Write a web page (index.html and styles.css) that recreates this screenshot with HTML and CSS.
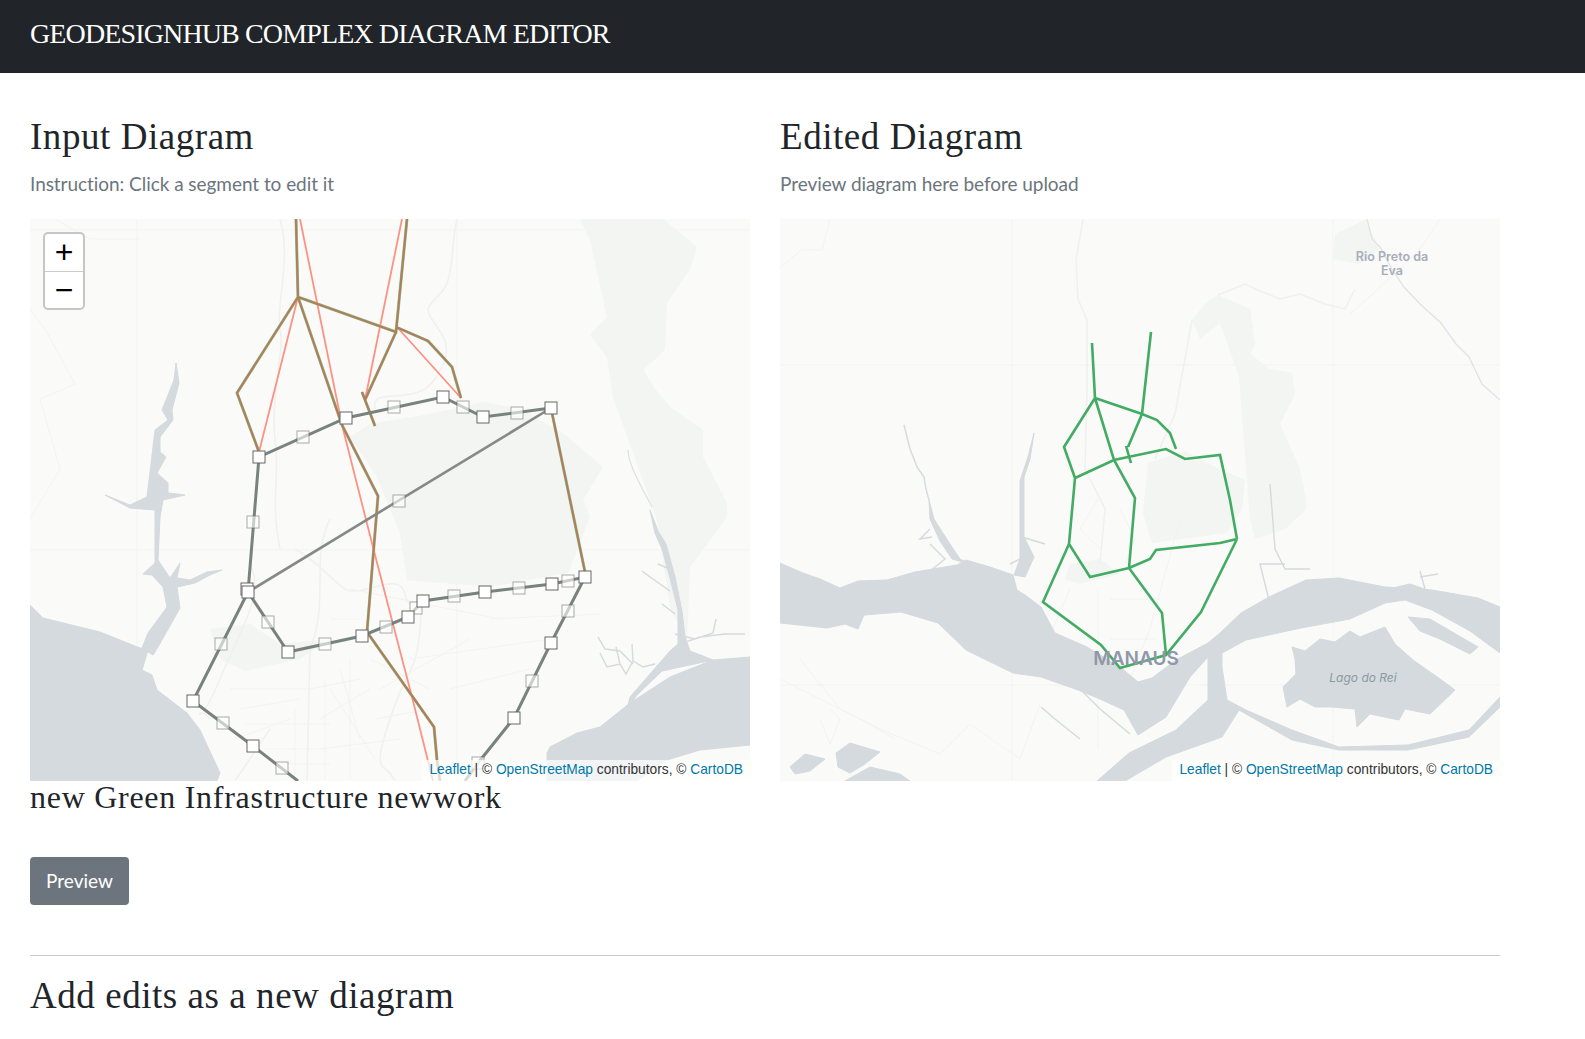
FILE: index.html
```html
<!DOCTYPE html>
<html lang="en">
<head>
<meta charset="utf-8">
<title>Geodesignhub Complex Diagram Editor</title>
<link rel="stylesheet" href="styles.css">
</head>
<body>
<header class="topbar"><span class="brand">GEODESIGNHUB COMPLEX DIAGRAM EDITOR</span></header>
<main class="content">
  <div class="columns">
    <section class="col">
      <h2 class="title">Input Diagram</h2>
      <p class="lead">Instruction: Click a segment to edit it</p>
      <div class="map">
        <svg class="map-svg" viewBox="0 0 720 562">
          <g class="grid"><path d="M107 0V562M427 0V562M0 11H720M0 331H720"/></g>
          <polygon class="park" points="550,0 633,0 667,28 660,50 637,84 635,131 613,151 625,170 640,188 673,211 673,238 697,284 697,298 660,348 657,424 640,388 627,301 620,281 583,178 577,138 560,116 577,98 560,21"/>
          <polygon class="park" points="453,183 490,190 533,214 573,248 553,281 560,298 538,354 460,368 377,361 370,314 347,258 320,218 340,205 400,195"/>
          <polygon class="park" points="180,410 220,405 250,425 300,420 270,440 215,452 190,440"/>
          <g class="roads">
            <path d="M250 0C262 40 245 90 250 110S240 180 245 220S240 280 250 330"/>
            <path d="M427 0C420 30 425 60 410 75S395 90 405 105S425 130 405 160S340 165 345 190"/>
            <path d="M265 330C285 340 300 360 315 370S370 350 375 375S395 360 390 410S380 440 360 500S355 540 365 562"/>
            <path d="M300 300C280 340 300 380 280 430L277 562"/>
            <path d="M222 349C232 380 215 400 190 460S165 480 180 500"/>
            <path d="M205 562L240 510"/>
          </g>
          <g class="minor">
            <path d="M200 470H280M210 490L270 480M215 505H300M235 530H290M240 545H300M205 520L260 500M280 470L330 460M290 500L340 470M290 530L370 520M300 470L345 540M310 450L330 520M340 440L400 470M345 500L400 490M350 470L440 420M300 400H330M265 490V560M295 460V560M320 440V560"/>
            <path d="M320 370L470 400M380 440L520 420M420 470L500 450M460 400L570 395M0 300L30 250L10 180L45 165L15 110L0 90M25 0L60 20L110 20"/>
          </g>
          <g class="water">
            <polygon points="0,386 13,399 70,413 110,429 118,431 112,451 122,456 127,471 157,494 170,511 190,554 187,562 0,562"/>
            <polygon points="146,144 144,161 132,191 138,201 125,211 123,228 117,278 100,286 75,276 100,289 125,291 125,344 113,355 122,356 133,368 137,388 118,414 112,429 123,436 128,428 150,389 147,368 165,364 180,356 192,351 177,353 160,361 147,359 150,344 140,359 128,341 130,298 133,281 155,276 138,274 138,264 127,254 136,238 130,233 130,218 143,201 142,191 149,164"/>
            <polygon points="517,534 520,528 547,514 570,508 600,484 640,458 683,441 720,438 720,526 670,531 637,541 607,562 517,562"/>
            <polygon points="620,291 625,314 632,330 640,359 648,391 648,425 640,432 600,478 597,490 607,476 632,452 683,441 660,432 655,418 652,392 645,358 636,325 628,312"/>
          </g>
          <g class="river">
            <path d="M570 434L577 448L590 445L596 455L603 442L613 448L625 445M590 445L586 428M603 442L602 425M645 415L665 420L683 414L686 400M650 425L670 418L695 415L715 415"/>
            <path d="M568 418L575 430L590 432L603 445M640 350L628 345M640 372L620 358L612 352M645 395L632 385"/>
          </g>
          <path class="river thin" d="M598 231C598 245 610 265 622 288"/>
          <g class="base-line">
            <path d="M266 0L268 78L207 174L229 233M268 78L366 113L377 0M366 108L398 122L422 148L431 179M366 113L335 181M332 173L345 207M268 78L312 206L348 277L337 413L404 508L407 541L410 562M522 194L555 353"/>
          </g>
          <g class="edit-red">
            <path d="M270 0L312 206L345 336L382 478L403 562M268 78L229 233M372 0L335 181M367 108L431 179"/>
          </g>
          <g class="edit-orange">
            <path d="M266 0L268 78L207 174L229 233M268 78L366 113L377 0M366 108L398 122L422 148L431 179M366 113L335 181M332 173L345 207M268 78L312 206L348 277L337 413L404 508L407 541L410 562M522 194L555 353"/>
          </g>
          <path class="gray-thin" d="M521 189L218 373"/>
          <path class="gray" d="M218 373L229 238L316 199L413 178L453 198L521 189M218 373L258 433L332 417L378 398L393 382L455 373L522 365L555 358L521 424L484 499L448 544L435 562M218 373L163 482L223 527L268 562"/>
          <g class="vx-mid">
            <rect x="267" y="212" width="12" height="12"/><rect x="358" y="182" width="12" height="12"/><rect x="427" y="182" width="12" height="12"/><rect x="481" y="188" width="12" height="12"/><rect x="363" y="276" width="12" height="12"/><rect x="217" y="297" width="12" height="12"/><rect x="232" y="397" width="12" height="12"/><rect x="289" y="419" width="12" height="12"/><rect x="350" y="402" width="12" height="12"/><rect x="380" y="383" width="12" height="12"/><rect x="418" y="371" width="12" height="12"/><rect x="483" y="363" width="12" height="12"/><rect x="532" y="356" width="12" height="12"/><rect x="532" y="386" width="12" height="12"/><rect x="496" y="456" width="12" height="12"/><rect x="442" y="538" width="12" height="12"/><rect x="185" y="419" width="12" height="12"/><rect x="187" y="498" width="12" height="12"/><rect x="246" y="543" width="12" height="12"/>
          </g>
          <g class="vx">
            <rect x="223" y="232" width="12" height="12"/><rect x="310" y="193" width="12" height="12"/><rect x="407" y="172" width="12" height="12"/><rect x="447" y="192" width="12" height="12"/><rect x="515" y="183" width="12" height="12"/><rect x="211" y="364" width="12" height="12"/><rect x="212" y="367" width="12" height="12"/><rect x="252" y="427" width="12" height="12"/><rect x="326" y="411" width="12" height="12"/><rect x="372" y="392" width="12" height="12"/><rect x="387" y="376" width="12" height="12"/><rect x="449" y="367" width="12" height="12"/><rect x="516" y="359" width="12" height="12"/><rect x="549" y="352" width="12" height="12"/><rect x="515" y="418" width="12" height="12"/><rect x="478" y="493" width="12" height="12"/><rect x="157" y="476" width="12" height="12"/><rect x="217" y="521" width="12" height="12"/>
          </g>
        </svg>
        <div class="zoom">
          <span class="zoom-btn">+</span>
          <span class="zoom-btn">−</span>
        </div>
        <div class="attrib"><a class="lnk">Leaflet</a> | © <a class="lnk">OpenStreetMap</a> contributors, © <a class="lnk">CartoDB</a></div>
      </div>
    </section>
    <section class="col">
      <h2 class="title">Edited Diagram</h2>
      <p class="lead">Preview diagram here before upload</p>
      <div class="map">
        <svg class="map-svg" viewBox="0 0 720 562">
          <g class="grid"><path d="M232 0V562M553 0V562M0 146H720M0 466H720"/></g>
          <polygon class="park" points="412,101 425,85 438,76 470,90 475,125 470,135 490,150 512,154 515,175 500,205 520,250 526,281 526,291 505,310 475,320 470,300 459,158 440,104 420,120"/>
          <polygon class="park" points="368,244 405,232 435,248 465,261 462,290 447,314 372,324 363,294"/>
          <polygon class="park" points="290,345 320,340 340,355 300,365 285,360"/>
          <polygon class="park" points="587,0 555,15 553,40 580,45 600,30 590,10"/>
          <g class="roads">
            <path d="M303 0L296 41L298 80L307 101L307 170L305 250L325 290L320 345"/>
            <path d="M412 101L395 195L375 240"/>
            <path d="M438 76L465 65L480 72L500 80L520 75L545 85L565 90L575 70"/>
          </g>
          <g class="minor">
            <path d="M318 280L300 310L320 330M340 290L355 320L345 345M318 370V530M400 300L370 410L350 460M330 380H380M330 420H375M290 370L260 440"/>
            <path d="M20 440L60 490L100 510L160 535L190 505L240 540L260 485M0 460L80 500L115 520M50 490L60 500L50 525L40 500"/>
            <path d="M660 0L640 30L620 50L570 95M50 0L42 31L21 31L0 49"/>
          </g>
          <g class="water">
            <polygon points="0,344 23,354 40,360 60,369 78,362 107,361 135,353 177,346 186,341 210,348 233,356 237,371 245,376 261,388 275,414 307,428 340,448 358,463 372,459 396,441 428,424 440,414 461,394 489,378 526,361 559,359 605,368 652,371 698,379 720,388 720,434 690,412 652,391 625,381 605,384 570,400 521,409 466,421 442,434 442,448 447,481 466,491 512,511 559,528 628,526 689,511 720,478 720,488 689,518 628,531 559,531 512,521 459,491 442,518 386,538 345,562 317,562 349,534 396,511 428,481 428,438 410,458 386,498 358,516 344,491 320,480 298,471 261,458 233,454 186,431 158,404 121,393 84,396 78,410 65,405 47,409 0,404"/>
            <polygon points="512,428 525,432 540,420 555,423 570,412 580,418 605,408 615,425 633,441 660,460 675,471 650,495 625,490 619,501 590,495 577,508 575,490 552,488 535,488 520,480 507,488 503,468 516,455 515,440"/>
            <polygon points="628,398 650,400 698,428 690,435 660,420 640,412"/>
            <polygon points="56,534 70,524 100,533 85,545 70,554 58,548"/>
            <polygon points="10,548 25,535 45,540 30,552 15,555"/>
            <polygon points="65,562 90,548 120,555 130,562"/>
            <polygon points="600,372 630,365 650,372 625,376"/>
            <polygon points="149,281 154,300 168,322 180,340 190,345 172,340 160,322 150,300"/>
            <polygon points="254,214 250,240 244,258 244,318 254,338 245,358 234,356 240,340 240,318 240,262 248,238"/>
          </g>
          <g class="river">
            <path d="M124 206L130 230L137 248L144 258L146 270L149 281"/>
            <path d="M242 318L265 325M240 340L230 345M150 325L165 340L150 352M150 310L140 320L152 318"/>
            <path d="M490 265L495 330L505 350L530 350M505 345L480 345L490 385M640 352L645 370M640 358L658 355"/>
            <path d="M261 488L275 500L300 520M300 470L320 490L350 515"/>
          </g>
          <path class="river thin" d="M587 0L592 20L600 28L612 50L624 68L640 85L661 104L676 125L689 138L702 165L720 181"/>
          <path class="green-line" d="M312 124L315 179M371 113L362 195M315 179L284 228L295 259M315 179L362 195L377 201L390 214L396 230M362 195L348 228M346 227L351 244M315 179L334 241L355 279L349 349M295 259L334 241L386 230L405 240L440 236L450 281L457 320M295 259L293 281L289 325L310 358L349 349L370 340L376 331L440 324L457 320M289 325L263 383L321 426L340 449L386 436L421 393L457 320M349 349L382 394L386 436"/>
          <text class="place place-sm" x="612" y="42">Rio Preto da</text>
          <text class="place place-sm" x="612" y="56">Eva</text>
          <text class="place place-lg" x="356" y="446">MANAUS</text>
          <text class="place place-it" x="583" y="463">Lago do Rei</text>
        </svg>
        <div class="attrib"><a class="lnk">Leaflet</a> | © <a class="lnk">OpenStreetMap</a> contributors, © <a class="lnk">CartoDB</a></div>
      </div>
    </section>
  </div>
  <h3 class="subtitle">new Green Infrastructure newwork</h3>
  <button class="btn" type="button">Preview</button>
  <hr class="rule">
  <h2 class="title title-last">Add edits as a new diagram</h2>
</main>
</body>
</html>
```

FILE: styles.css
```css
* { box-sizing: border-box; }
html, body { margin: 0; padding: 0; background: #fff; }
body { font-family: "Lato", "Liberation Sans", sans-serif; color: #212529; }

.topbar {
  height: 73px;
  background: #212529;
  padding: 16px 30px 0;
}
.brand {
  display: block;
  font-family: "Liberation Serif", serif;
  font-size: 28px;
  line-height: 36px;
  letter-spacing: -.87px;
  color: #fff;
}

.content { width: 1500px; padding: 0 0 0 30px; }
.columns { display: grid; grid-template-columns: 720px 720px; column-gap: 30px; padding-top: 44px; }

.title {
  margin: 0;
  font-family: "Liberation Serif", serif;
  font-weight: 400;
  font-size: 37px;
  line-height: 40px;
  letter-spacing: .55px;
  color: #212529;
}
.lead {
  margin: 13px 0 0;
  font-size: 19px;
  line-height: 27px;
  letter-spacing: -.05px;
  color: #6c757d;
}
.map {
  position: relative;
  margin-top: 22px;
  height: 562px;
  background: #fafaf8;
  overflow: hidden;
}
.map-svg { display: block; width: 720px; height: 562px; }

.grid path { fill: none; stroke: #f3f3f1; stroke-width: 1; }
.park { fill: #f2f5f1; }
.roads path { fill: none; stroke: #f0f0ee; stroke-width: 1.5; }
.minor path { fill: none; stroke: #f3f3f1; stroke-width: 1; }
.water polygon { fill: #d4dadd; stroke: #d4dadd; stroke-width: 1; stroke-linejoin: round; }
.river { fill: none; stroke: #d4dadd; stroke-width: 1.4; }
.river path { fill: none; }
.river.thin { stroke: #dfe3e8; stroke-width: 1.3; }

.base-line path { fill: none; stroke: #8fcda4; stroke-width: 3; }
.edit-orange path { fill: none; stroke: #b07f5a; stroke-width: 2.2; }
.edit-red path { fill: none; stroke: #fb9384; stroke-width: 1.8; }
.gray { fill: none; stroke: #78837f; stroke-width: 3; }
.gray-thin { fill: none; stroke: #858a87; stroke-width: 2.6; }
.vx rect { fill: #fff; stroke: #666; stroke-width: 1; }
.vx-mid rect { fill: #fff; fill-opacity: .6; stroke: #666; stroke-width: 1; stroke-opacity: .55; }
.green-line { fill: none; stroke: #42ab64; stroke-width: 2.6; }

.place { font-family: "Inter", "Liberation Sans", sans-serif; text-anchor: middle; }
.place-sm { font-size: 12.5px; font-weight: 600; fill: #a7aebb; }
.place-lg { font-size: 19px; font-weight: 600; fill: #8f98a8; }
.place-it { font-size: 12px; font-style: italic; fill: #8a9aa2; }

.zoom {
  position: absolute;
  top: 13px;
  left: 13px;
  width: 42px;
  height: 78px;
  display: flex;
  flex-direction: column;
  border: 2px solid #c6c6c4;
  border-radius: 5px;
  background: #fff;
}
.zoom-btn {
  flex: 1;
  display: flex;
  align-items: center;
  justify-content: center;
  font-family: "Liberation Sans", sans-serif;
  font-size: 32px;
  line-height: 1;
  color: #000;
}
.zoom-btn + .zoom-btn { border-top: 1px solid #ccc; }

.attrib {
  position: absolute;
  right: 0;
  bottom: 0;
  height: 21px;
  padding: 0 7px;
  font-family: "Liberation Sans", sans-serif;
  font-size: 13.75px;
  line-height: 19px;
  color: #333;
  background: rgba(255, 255, 255, .7);
}
.lnk { color: #0078a8; }

.subtitle {
  margin: 0;
  font-family: "Liberation Serif", serif;
  font-weight: 400;
  font-size: 32px;
  line-height: 32px;
  letter-spacing: .72px;
  color: #212529;
}
.btn {
  display: block;
  margin-top: 44px;
  width: 99px;
  height: 48px;
  padding: 0;
  border: 0;
  border-radius: 4px;
  background: #6c757d;
  color: #fff;
  font-family: "Lato", sans-serif;
  font-size: 19px;
  line-height: 46px;
}
.rule { margin: 50px 0 0; border: 0; border-top: 1px solid #c9cccf; width: 1470px; }
.title-last { margin-top: 20px; }
```
